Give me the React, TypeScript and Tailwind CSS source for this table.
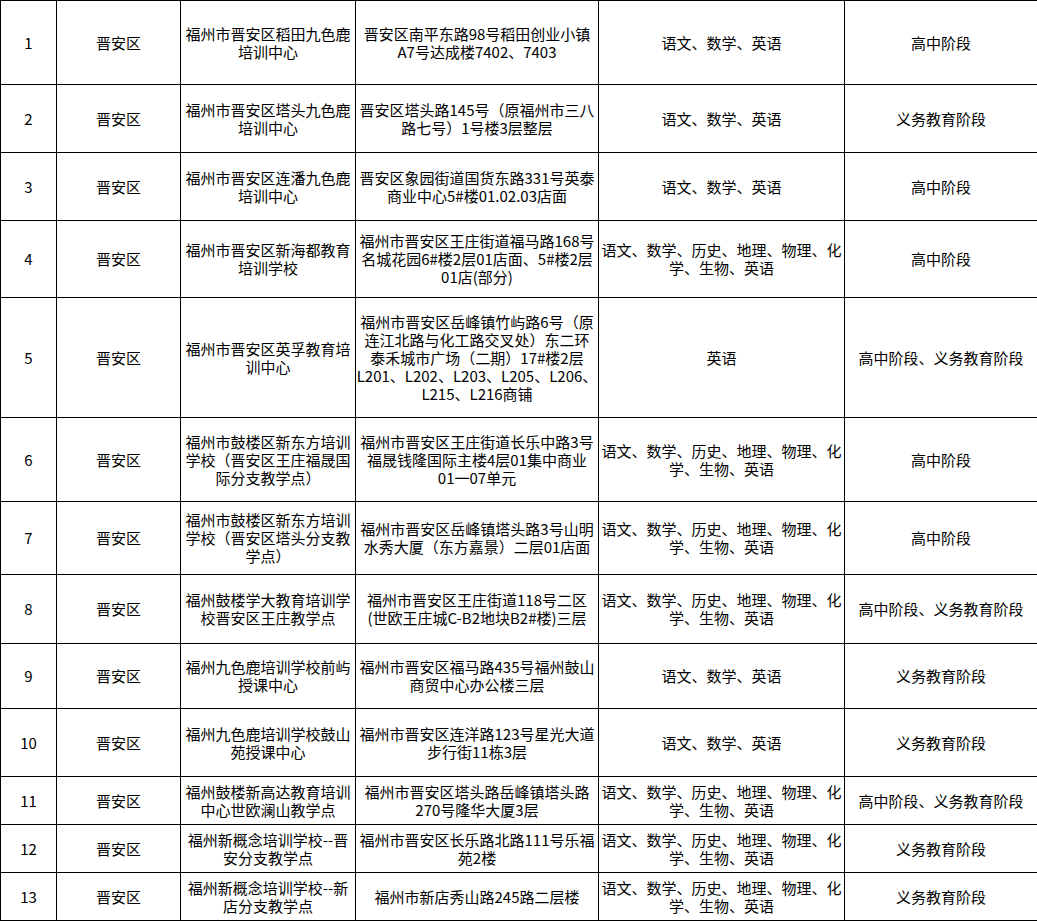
import React from 'react';

type Row = {
  no: number;
  h: number;
  name: string[];
  addr: string[];
  subjects: string[];
  stage: string;
};

const ALL = ['语文、数学、历史、地理、物理、化', '学、生物、英语'];
const BASIC = ['语文、数学、英语'];

const rows: Row[] = [
  { no: 1, h: 84, name: ['福州市晋安区稻田九色鹿', '培训中心'], addr: ['晋安区南平东路98号稻田创业小镇', 'A7号达成楼7402、7403'], subjects: BASIC, stage: '高中阶段' },
  { no: 2, h: 68, name: ['福州市晋安区塔头九色鹿', '培训中心'], addr: ['晋安区塔头路145号（原福州市三八', '路七号）1号楼3层整层'], subjects: BASIC, stage: '义务教育阶段' },
  { no: 3, h: 68, name: ['福州市晋安区连潘九色鹿', '培训中心'], addr: ['晋安区象园街道国货东路331号英泰', '商业中心5#楼01.02.03店面'], subjects: BASIC, stage: '高中阶段' },
  { no: 4, h: 77, name: ['福州市晋安区新海都教育', '培训学校'], addr: ['福州市晋安区王庄街道福马路168号', '名城花园6#楼2层01店面、5#楼2层', '01店(部分)'], subjects: ALL, stage: '高中阶段' },
  {
    no: 5,
    h: 120,
    name: ['福州市晋安区英孚教育培', '训中心'],
    addr: ['福州市晋安区岳峰镇竹屿路6号（原', '连江北路与化工路交叉处）东二环', '泰禾城市广场（二期）17#楼2层', 'L201、L202、L203、L205、L206、', 'L215、L216商铺'],
    subjects: ['英语'],
    stage: '高中阶段、义务教育阶段',
  },
  { no: 6, h: 84, name: ['福州市鼓楼区新东方培训', '学校（晋安区王庄福晟国', '际分支教学点）'], addr: ['福州市晋安区王庄街道长乐中路3号', '福晟钱隆国际主楼4层01集中商业', '01一07单元'], subjects: ALL, stage: '高中阶段' },
  { no: 7, h: 73, name: ['福州市鼓楼区新东方培训', '学校（晋安区塔头分支教', '学点）'], addr: ['福州市晋安区岳峰镇塔头路3号山明', '水秀大厦（东方嘉景）二层01店面'], subjects: ALL, stage: '高中阶段' },
  { no: 8, h: 69, name: ['福州鼓楼学大教育培训学', '校晋安区王庄教学点'], addr: ['福州市晋安区王庄街道118号二区', '(世欧王庄城C-B2地块B2#楼)三层'], subjects: ALL, stage: '高中阶段、义务教育阶段' },
  { no: 9, h: 65, name: ['福州九色鹿培训学校前屿', '授课中心'], addr: ['福州市晋安区福马路435号福州鼓山', '商贸中心办公楼三层'], subjects: BASIC, stage: '义务教育阶段' },
  { no: 10, h: 68, name: ['福州九色鹿培训学校鼓山', '苑授课中心'], addr: ['福州市晋安区连洋路123号星光大道', '步行街11栋3层'], subjects: BASIC, stage: '义务教育阶段' },
  { no: 11, h: 48, name: ['福州鼓楼新高达教育培训', '中心世欧澜山教学点'], addr: ['福州市晋安区塔头路岳峰镇塔头路', '270号隆华大厦3层'], subjects: ALL, stage: '高中阶段、义务教育阶段' },
  { no: 12, h: 48, name: ['福州新概念培训学校--晋', '安分支教学点'], addr: ['福州市晋安区长乐路北路111号乐福', '苑2楼'], subjects: ALL, stage: '义务教育阶段' },
  { no: 13, h: 48, name: ['福州新概念培训学校--新', '店分支教学点'], addr: ['福州市新店秀山路245路二层楼'], subjects: ALL, stage: '义务教育阶段' },
];

function Lines({ lines }: { lines: string[] }) {
  return (
    <>
      {lines.map((l, i) => (
        <div key={i} className="whitespace-nowrap">
          {l}
        </div>
      ))}
    </>
  );
}

export default function App() {
  return (
    <div className="w-[1037px] h-[921px] bg-white overflow-hidden">
      <table
        className="w-[1037px] table-fixed border-collapse text-black text-[15px] leading-[18px] text-center"
        style={{ fontFamily: '"Noto Sans CJK SC", "Noto Sans", sans-serif' }}
      >
        <colgroup>
          <col className="w-[56px]" />
          <col className="w-[124px]" />
          <col className="w-[175px]" />
          <col className="w-[243px]" />
          <col className="w-[246px]" />
          <col className="w-[193px]" />
        </colgroup>
        <tbody>
          {rows.map((r) => (
            <tr key={r.no} style={{ height: r.h }}>
              <td className="border border-black p-0 align-middle">{r.no}</td>
              <td className="border border-black p-0 align-middle">晋安区</td>
              <td className="border border-black p-0 align-middle">
                <Lines lines={r.name} />
              </td>
              <td className="border border-black p-0 align-middle">
                <Lines lines={r.addr} />
              </td>
              <td className="border border-black p-0 align-middle">
                <Lines lines={r.subjects} />
              </td>
              <td className="border border-black p-0 align-middle">{r.stage}</td>
            </tr>
          ))}
        </tbody>
      </table>
    </div>
  );
}
